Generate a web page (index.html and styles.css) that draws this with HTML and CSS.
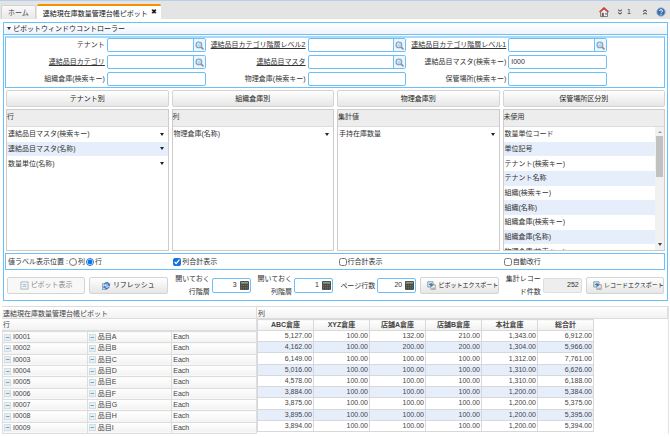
FILE: index.html
```html
<!DOCTYPE html>
<html lang="ja">
<head>
    <meta charset="UTF-8">
    <title>連結現在庫数量管理台帳ピボット</title>
    <link rel="stylesheet" href="styles.css">
</head>
<body>
    <!-- アイコン定義 -->
    <svg class="sprite" aria-hidden="true">
        <symbol id="i-search" viewBox="0 0 12 12">
            <path d="M7.6 7.6 10.6 10.6" stroke="#8a8f96" stroke-width="2.2" stroke-linecap="round"/>
            <circle cx="5.2" cy="5.2" r="3.9" fill="#b9d9f5" stroke="#8b9db3" stroke-width="1.4"/>
            <path d="M3.2 5a2.2 2.2 0 0 1 2-2" stroke="#fff" fill="none"/>
        </symbol>
        <symbol id="i-calc" viewBox="0 0 10 10">
            <rect width="10" height="10" rx="1" fill="#4a4a45"/>
            <rect x="1" y="1" width="8" height="2" fill="#8b9a80"/>
            <path d="M1 5h8M1 7h8M1 9h8" stroke="#85857d" stroke-width=".8" stroke-dasharray="1.2 1"/>
        </symbol>
        <symbol id="i-export" viewBox="0 0 12 12">
            <path d="M1 1h7v7H1z" fill="#dfe9f1" stroke="#6d8494"/>
            <path d="M5 5h6v6H5z" fill="#f4f4f4" stroke="#7b858c"/>
            <path d="M2.5 5.5C2.5 2.5 7 2 7 4.5h2L6.2 8 3.8 4.500h1.400" fill="#2f7fb5"/>
            <path d="M7 9.5h3" stroke="#777"/>
        </symbol>
    </svg>

    <!-- タブバー -->
    <header class="topbar">
        <nav class="tabs">
            <a class="tab" href="#">ホーム</a>
            <a class="tab active" href="#">連結現在庫数量管理台帳ピボット<span class="close">✖</span></a>
        </nav>
        <div class="tools">
            <button class="tool" aria-label="ホーム">
                <svg width="10" height="10" viewBox="0 0 10 10">
                    <path d="M1.5 5v4.5h7V5L5 2z" fill="#eee" stroke="#666" stroke-width=".8"/>
                    <path d="M.5 5 5 .9 9.5 5" fill="none" stroke="#d33b34" stroke-width="1.4"/>
                    <path d="M2.8 5.8h2v3.7h-2z" fill="#7a5a48"/>
                    <path d="M6 6h1.8v1.8H6z" fill="#6b8fb5"/>
                </svg>
            </button>
            <button class="tool" aria-label="展開">
                <svg width="6" height="6" viewBox="0 0 6 6"><path d="M1 .7l2 1.6L5 .7M1 3.5l2 1.6 2-1.6" fill="none" stroke="#333"/></svg>
            </button>
            <span class="count">1</span>
            <button class="tool up" aria-label="折りたたむ">
                <svg width="6" height="6" viewBox="0 0 6 6"><path d="M1 2.5l2-1.6 2 1.6M1 5.3l2-1.6 2 1.6" fill="none" stroke="#333"/></svg>
            </button>
            <button class="tool" aria-label="ヘルプ">
                <svg width="10" height="10" viewBox="0 0 10 10">
                    <circle cx="5" cy="5" r="4.3" fill="#3c6ea8" stroke="#a9bfd8"/>
                    <path d="M3.6 4C3.6 2.2 6.5 2.2 6.5 4 6.5 5 5 5 5 6.2M5 7v1" fill="none" stroke="#fff"/>
                </svg>
            </button>
        </div>
    </header>

    <main>
        <section class="controller">
            <h1 class="title"><span class="caret"></span>ピボットウィンドウコントローラー</h1>

            <div class="body">
                <!-- 検索条件 -->
                <form class="filters">
                    <label for="tenant">テナント</label>
                    <div class="field"><input id="tenant" type="text"><button type="button" aria-label="検索"><svg><use href="#i-search"/></svg></button></div>
                    <label class="link" for="level2">連結品目カテゴリ階層レベル2</label>
                    <div class="field"><input id="level2" type="text"><button type="button" aria-label="検索"><svg><use href="#i-search"/></svg></button></div>
                    <label class="link" for="level1">連結品目カテゴリ階層レベル1</label>
                    <div class="field"><input id="level1" type="text"><button type="button" aria-label="検索"><svg><use href="#i-search"/></svg></button></div>

                    <label class="link row2" for="category">連結品目カテゴリ</label>
                    <div class="field"><input id="category" type="text"><button type="button" aria-label="検索"><svg><use href="#i-search"/></svg></button></div>
                    <label class="link" for="master">連結品目マスタ</label>
                    <div class="field"><input id="master" type="text"><button type="button" aria-label="検索"><svg><use href="#i-search"/></svg></button></div>
                    <label for="masterKey">連結品目マスタ(検索キー)</label>
                    <div class="field"><input id="masterKey" type="text" value="I000"></div>

                    <label class="row3" for="orgKey">組織倉庫(検索キー)</label>
                    <div class="field"><input id="orgKey" type="text"></div>
                    <label for="whKey">物理倉庫(検索キー)</label>
                    <div class="field"><input id="whKey" type="text"></div>
                    <label for="locKey">保管場所(検索キー)</label>
                    <div class="field"><input id="locKey" type="text"></div>
                </form>

                <div class="quad presets">
                    <button class="btn">テナント別</button>
                    <button class="btn">組織倉庫別</button>
                    <button class="btn">物理倉庫別</button>
                    <button class="btn">保管場所区分別</button>
                </div>

                <!-- 行・列・集計値の割り当て -->
                <div class="quad">
                    <div class="listbox">
                        <h2>行</h2>
                        <div class="scroll">
                            <ul>
                                <li>連結品目マスタ(検索キー)<button class="drop" aria-label="メニュー"></button></li>
                                <li>連結品目マスタ(名称)<button class="drop" aria-label="メニュー"></button></li>
                                <li>数量単位(名称)<button class="drop" aria-label="メニュー"></button></li>
                            </ul>
                        </div>
                    </div>
                    <div class="listbox">
                        <h2>列</h2>
                        <div class="scroll">
                            <ul>
                                <li>物理倉庫(名称)<button class="drop" aria-label="メニュー"></button></li>
                            </ul>
                        </div>
                    </div>
                    <div class="listbox">
                        <h2>集計値</h2>
                        <div class="scroll">
                            <ul>
                                <li>手持在庫数量<button class="drop" aria-label="メニュー"></button></li>
                            </ul>
                        </div>
                    </div>
                    <div class="listbox">
                        <h2>未使用</h2>
                        <div class="scroll">
                            <ul>
                                <li>数量単位コード</li>
                                <li>単位記号</li>
                                <li>テナント(検索キー)</li>
                                <li>テナント名称</li>
                                <li>組織(検索キー)</li>
                                <li>組織(名称)</li>
                                <li>組織倉庫(検索キー)</li>
                                <li>組織倉庫(名称)</li>
                                <li>物理倉庫(検索キー)</li>
                            </ul>
                            <div class="bar"><i class="arrow-up"></i><i class="thumb"></i><i class="arrow-down"></i></div>
                        </div>
                    </div>
                </div>

                <div class="quad options">
                    <div class="opt">値ラベル表示位置 :
                        <input type="radio" name="pos" id="posCol"><label for="posCol">列</label>
                        <input type="radio" name="pos" id="posRow" checked><label for="posRow">行</label>
                    </div>
                    <div class="opt"><input type="checkbox" id="colTotal" checked><label for="colTotal">列合計表示</label></div>
                    <div class="opt"><input type="checkbox" id="rowTotal"><label for="rowTotal">行合計表示</label></div>
                    <div class="opt"><input type="checkbox" id="wrap"><label for="wrap">自動改行</label></div>
                </div>

                <!-- 実行ボタンと件数 -->
                <div class="quad actions">
                    <div class="pair">
                        <button class="btn" disabled>
                            <svg viewBox="0 0 10 10"><path d="M1 1h8v8H1z" fill="#f2f5f8" stroke="#a9b3bf"/><path d="M3 4h4M3 6h4" stroke="#a9b3bf"/></svg>ピボット表示
                        </button>
                        <button class="btn">
                            <svg viewBox="0 0 10 10"><path d="M.5 3h5v6.5h-5z" fill="#d5e3f3" stroke="#7d9cc4"/><path d="M2 4C3 .5 7 .5 8 3l1.300-.5L8.500 6 5.500 4.500 6.800 3.700C6 2.200 4 2.500 3.500 4zM8.500 6.500c-1 3-5 3-6 1l-1.200.5L2 5l3 1.500-1.200.7c1 1.200 2.700.8 3.200-.7z" fill="#3f78c0"/></svg>リフレッシュ
                        </button>
                    </div>
                    <div class="pair">
                        <div class="num"><label for="rowLv">開いておく行階層</label><div class="field"><input id="rowLv" type="text" value="3"><button aria-label="電卓"><svg><use href="#i-calc"/></svg></button></div></div>
                        <div class="num"><label for="colLv">開いておく列階層</label><div class="field"><input id="colLv" type="text" value="1"><button aria-label="電卓"><svg><use href="#i-calc"/></svg></button></div></div>
                    </div>
                    <div class="pair">
                        <div class="num"><label for="pageRows">ページ行数</label><div class="field"><input id="pageRows" type="text" value="20"><button aria-label="電卓"><svg><use href="#i-calc"/></svg></button></div></div>
                        <button class="btn export"><svg><use href="#i-export"/></svg>ピボットエクスポート</button>
                    </div>
                    <div class="pair">
                        <div class="num"><label for="records">集計レコード件数</label><div class="field readonly"><input id="records" type="text" value="252" readonly></div></div>
                        <button class="btn export"><svg><use href="#i-export"/></svg>レコードエクスポート</button>
                    </div>
                </div>
            </div>
        </section>

        <!-- ピボット結果 -->
        <section class="pivot">
            <div class="left">
                <div class="cap">連結現在庫数量管理台帳ピボット</div>
                <div class="cap sub">行</div>
                <table class="rows">
                    <tr><td><button>−</button>I0001</td><td><button>−</button>品目A</td><td>Each</td></tr>
                    <tr><td><button>−</button>I0002</td><td><button>−</button>品目B</td><td>Each</td></tr>
                    <tr><td><button>−</button>I0003</td><td><button>−</button>品目C</td><td>Each</td></tr>
                    <tr><td><button>−</button>I0004</td><td><button>−</button>品目D</td><td>Each</td></tr>
                    <tr><td><button>−</button>I0005</td><td><button>−</button>品目E</td><td>Each</td></tr>
                    <tr><td><button>−</button>I0006</td><td><button>−</button>品目F</td><td>Each</td></tr>
                    <tr><td><button>−</button>I0007</td><td><button>−</button>品目G</td><td>Each</td></tr>
                    <tr><td><button>−</button>I0008</td><td><button>−</button>品目H</td><td>Each</td></tr>
                    <tr><td><button>−</button>I0009</td><td><button>−</button>品目I</td><td>Each</td></tr>
                </table>
            </div>
            <div class="right">
                <div class="cap">列</div>
                <table class="values">
                    <thead>
                        <tr><th>ABC倉庫</th><th>XYZ倉庫</th><th>店舗A倉庫</th><th>店舗B倉庫</th><th>本社倉庫</th><th>総合計</th></tr>
                    </thead>
                    <tbody>
                        <tr><td>5,127.00</td><td>100.00</td><td>132.00</td><td>210.00</td><td>1,343.00</td><td>6,912.00</td></tr>
                        <tr><td>4,162.00</td><td>100.00</td><td>200.00</td><td>200.00</td><td>1,304.00</td><td>5,966.00</td></tr>
                        <tr><td>6,149.00</td><td>100.00</td><td>100.00</td><td>100.00</td><td>1,312.00</td><td>7,761.00</td></tr>
                        <tr><td>5,016.00</td><td>100.00</td><td>100.00</td><td>100.00</td><td>1,310.00</td><td>6,626.00</td></tr>
                        <tr><td>4,578.00</td><td>100.00</td><td>100.00</td><td>100.00</td><td>1,310.00</td><td>6,188.00</td></tr>
                        <tr><td>3,884.00</td><td>100.00</td><td>100.00</td><td>100.00</td><td>1,200.00</td><td>5,384.00</td></tr>
                        <tr><td>3,875.00</td><td>100.00</td><td>100.00</td><td>100.00</td><td>1,200.00</td><td>5,375.00</td></tr>
                        <tr><td>3,895.00</td><td>100.00</td><td>100.00</td><td>100.00</td><td>1,200.00</td><td>5,395.00</td></tr>
                        <tr><td>3,894.00</td><td>100.00</td><td>100.00</td><td>100.00</td><td>1,200.00</td><td>5,394.00</td></tr>
                    </tbody>
                </table>
            </div>
        </section>
    </main>
</body>
</html>
```

FILE: styles.css
```css
* {
    box-sizing: border-box;
}
body {
    margin: 0;
    font: 7px/10px "Liberation Sans", "Noto Sans CJK JP", sans-serif;
    color: #333;
    background: #fff;
}
h1, h2, ul {
    margin: 0;
    padding: 0;
    font: inherit;
    list-style: none;
}
button, input {
    font: inherit;
    color: inherit;
    margin: 0;
    padding: 0;
}
svg {
    display: block;
    flex: none;
}
.sprite {
    position: absolute;
    width: 0;
    height: 0;
}

/* タブバー */
.topbar {
    display: flex;
    justify-content: space-between;
    height: 19px;
    background: #e4e4e4;
    border-top: 1px solid #b5cfee;
}
.tabs {
    display: flex;
    align-items: flex-end;
    gap: 1px;
    padding-left: 1px;
}
.tab {
    height: 14px;
    padding: 2px 6px;
    color: #444;
    text-decoration: none;
    white-space: nowrap;
    background: linear-gradient(#fafafa, #e8e8e8);
    border: 1px solid #d2d2d2;
    border-bottom: 0;
    border-radius: 2px 2px 0 0;
}
.tab.active {
    height: 15px;
    padding: 2px 4px 2px 6px;
    color: #111;
    background: #fff;
    border: 0;
    border-top: 2px solid #f39200;
}
.close {
    margin-left: 3px;
    vertical-align: 2px;
    line-height: 1;
}
.tools {
    display: flex;
    align-items: center;
    gap: 8px;
    padding: 3px 4px 0 0;
}
.tool {
    border: 0;
    background: none;
}
.tool.up {
    margin-left: 3px;
}
.count {
    margin-left: -4px;
}

/* コントローラー */
.controller {
    margin: 3px 2px 0 3px;
    border: 1px solid #6cc0f8;
}
.title {
    display: flex;
    align-items: center;
    gap: 2px;
    height: 12px;
    padding-left: 3px;
    color: #222;
    background: linear-gradient(#fff, #edf5fd);
    border-bottom: 1px solid #6cc0f8;
}
.caret {
    border: 2px solid transparent;
    border-top: 3px solid #333;
    border-bottom: 0;
}
.body {
    padding: 1px 2px 2px 1px;
}
.filters {
    display: grid;
    grid-template-columns: 101fr 99fr 102fr 99fr 102fr 99fr 57fr;
    gap: 3px 0;
    padding-bottom: 1px;
    border: 1px solid #6cc0f8;
    border-top: 2px solid #a9d9f8;
}
.filters label {
    padding-right: 2px;
    line-height: 14px;
    text-align: right;
    justify-self: end;
    white-space: nowrap;
}
.filters .link {
    text-decoration: underline;
}
.row2, .row3 {
    grid-column: 1;
}
.field {
    display: flex;
    height: 14px;
    background: #fff;
    border: 1px solid #6cc0f8;
    border-radius: 2px;
}
.field input {
    flex: 1;
    width: 0;
    min-width: 0;
    padding: 0 2px;
    border: 0;
    background: none;
    outline: 0;
}
.field button {
    display: grid;
    place-items: center;
    width: 12px;
    border: 0;
    border-left: 1px solid #6cc0f8;
    background: #eef6fd;
}
.field svg {
    width: 9px;
    height: 9px;
}

.quad {
    display: grid;
    grid-template-columns: repeat(4, minmax(0, 1fr));
    gap: 3px;
    padding-left: 1px;
}
.presets {
    margin: 2px 0;
}
.btn {
    display: flex;
    align-items: center;
    justify-content: center;
    gap: 2px;
    height: 17px;
    color: #222;
    white-space: nowrap;
    background: linear-gradient(#fff, #e6e6e6);
    border: 1px solid #d4d4d4;
    border-radius: 2px;
}
.btn svg {
    width: 9px;
    height: 9px;
}
.btn:disabled {
    color: #888;
    background: #f8f8f8;
}

.listbox {
    height: 142px;
    border: 1px solid #ccc;
}
.listbox h2 {
    height: 17px;
    line-height: 13px;
    background: #ededed;
    border-bottom: 1px solid #ddd;
}
.scroll {
    display: flex;
    height: 123px;
    overflow: hidden;
}
.scroll ul {
    display: grid;
    grid-template-rows: repeat(9, 1fr);
    flex: 1;
    height: 132px;
}
.scroll li {
    display: flex;
    align-items: center;
    justify-content: space-between;
    padding: 0 4px 0 1px;
}
.scroll li:nth-child(even) {
    background: #e6eefc;
}
.drop {
    border: 2px solid transparent;
    border-top: 3px solid #222;
    border-bottom: 0;
    background: none;
}
.bar {
    display: flex;
    flex-direction: column;
    align-items: center;
    width: 9px;
    padding: 4px 0;
    background: #f1f1f1;
}
.thumb {
    width: 7px;
    height: 41px;
    margin: 3px 0 auto;
    background: #c1c1c1;
}
.arrow-up, .arrow-down {
    border: 2px solid transparent;
}
.arrow-up {
    border-top: 0;
    border-bottom-color: #999;
}
.arrow-down {
    border-bottom: 0;
    border-top: 3px solid #444;
}

.options {
    height: 17px;
    margin-top: 2px;
    padding: 0;
    border: 1px solid #6cc0f8;
    align-items: center;
}
.opt {
    display: flex;
    align-items: center;
    gap: 1px;
    padding-left: 2px;
}
.opt input {
    width: 8px;
    height: 8px;
    accent-color: #1471e0;
}

.actions {
    padding-top: 2px;
    align-items: center;
}
.pair {
    display: grid;
    grid-template-columns: repeat(2, minmax(0, 1fr));
    gap: 4px;
    align-items: center;
    padding: 0 1px;
}
.num {
    display: flex;
    align-items: center;
    justify-content: flex-end;
    gap: 2px;
}
.num label {
    flex: 1;
    max-width: 36px;
    line-height: 13px;
    text-align: right;
}
.num .field {
    flex: none;
    width: 39px;
    height: 15px;
}
.num input {
    text-align: right;
}
.num .field button {
    width: 11px;
    border: 0;
    background: none;
}
.num .readonly {
    background: #eee;
    border-color: #ddd;
}
.export {
    gap: 2px;
    padding-left: 7px;
    font-size: 6px;
}

/* ピボット結果 */
.pivot {
    display: grid;
    grid-template-columns: 255fr 412fr;
    margin: 5px 1px 0 2px;
    color: #444;
}
.right {
    border-right: 1px solid #e4e4e4;
}
.cap {
    height: 13px;
    padding-left: 1px;
    line-height: 13px;
    background: linear-gradient(#fff, #f2f2f2);
    border: 1px solid #ddd;
    border-width: 1px 1px 1px 0;
}
.cap.sub {
    height: 12px;
    line-height: 11px;
    border-top: 0;
}
table {
    border-collapse: collapse;
    table-layout: fixed;
}
td, th {
    padding: 0 1px;
    line-height: 10px;
    border: 1px solid #d8d8d8;
}
.rows {
    width: 100%;
    height: 103px;
}
.rows td {
    border-color: #ddd;
    background: linear-gradient(#fff, #f2f2f2);
}
.rows button {
    width: 7px;
    height: 7px;
    margin-right: 2px;
    line-height: 5px;
    vertical-align: middle;
    color: #356;
    background: #e4eff6;
    border: 1px solid #cfdfe8;
}
.values {
    width: 82%;
    height: 113px;
}
.values th {
    background: linear-gradient(#fff, #f0f0f0);
}
.values td {
    text-align: right;
}
.values tbody tr:nth-child(even) {
    background: #e6eefc;
}
```
